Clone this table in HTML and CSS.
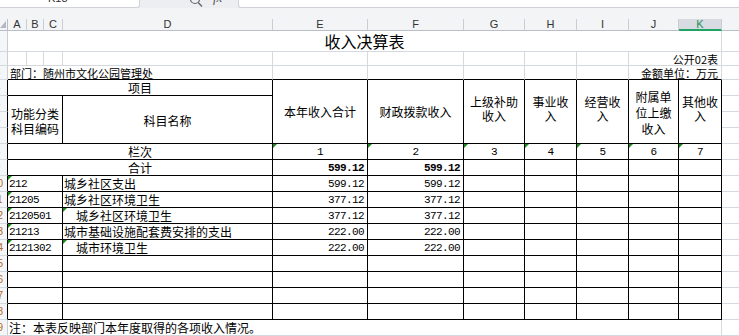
FILE: index.html
```html
<!DOCTYPE html>
<html lang="zh-CN">
<head>
<meta charset="utf-8">
<title>收入决算表</title>
<link rel="stylesheet" href="styles.css">
</head>
<body>
<div class="fbar">
  <div class="namebox"><span>K18</span></div>
  <div class="tools">
    <svg class="mag" width="16" height="8" viewBox="0 0 16 8"><circle cx="7" cy="-1" r="4.5" fill="none" stroke="#666" stroke-width="1.2"/><line x1="10.2" y1="2.4" x2="14" y2="6.5" stroke="#666" stroke-width="1.4"/></svg>
    <span class="fx">fx</span>
  </div>
  <div class="finput"></div>
</div>
<div class="sheet">
  <div class="spacer"></div>

  <div class="ch corner"><svg width="6" height="7" viewBox="0 0 6 7"><polygon points="6,0 6,7 0,7" fill="#b4b8c0"/></svg></div>
  <div class="ch">A</div><div class="ch">B</div><div class="ch">C</div><div class="ch">D</div>
  <div class="ch">E</div><div class="ch">F</div><div class="ch">G</div><div class="ch">H</div>
  <div class="ch">I</div><div class="ch">J</div><div class="ch sel">K</div><div class="ch chl"></div>

  <div class="rh"><span>1</span></div>
  <div class="c s11 ctr title">收入决算表</div>
  <div class="c l"></div>

  <div class="rh"><span>2</span></div>
  <div class="c"></div><div class="c"></div><div class="c"></div><div class="c"></div>
  <div class="c"></div><div class="c"></div><div class="c"></div><div class="c"></div><div class="c"></div>
  <div class="c s2 small rt">公开02表</div>
  <div class="c l"></div>

  <div class="rh"><span>3</span></div>
  <div class="c s4 bb small lf2">部门：随州市文化公园管理处</div>
  <div class="c bb"></div><div class="c bb"></div><div class="c bb"></div><div class="c bb"></div><div class="c bb"></div>
  <div class="c s2 bb small rt">金额单位：万元</div>
  <div class="c l"></div>

  <div class="rh k"><span>4</span></div>
  <div class="c b s4 ctr bot">项目</div>
  <div class="c b r4 ctr hd">本年收入合计</div>
  <div class="c b r4 ctr hd">财政拨款收入</div>
  <div class="c b r4 ctr hd up"><span>上级补助<br>收入</span></div>
  <div class="c b r4 ctr hd up"><span>事业收<br>入</span></div>
  <div class="c b r4 ctr hd up"><span>经营收<br>入</span></div>
  <div class="c b r4 ctr hd three"><span>附属单<br>位上缴<br>收入</span></div>
  <div class="c b r4 ctr hd up"><span>其他收<br>入</span></div>
  <div class="c l"></div>

  <div class="rh k"><span>5</span></div>
  <div class="c b s3 r3 ctr hd low"><span>功能分类<br>科目编码</span></div>
  <div class="c b r3 ctr hd low">科目名称</div>
  <div class="c l"></div>
  <div class="rh k"><span>6</span></div><div class="c l"></div>
  <div class="rh k"><span>7</span></div><div class="c l"></div>

  <div class="rh k"><span>8</span></div>
  <div class="c b s4 ctr">栏次</div>
  <div class="c b ctr num tri">1</div>
  <div class="c b ctr num tri">2</div>
  <div class="c b ctr num tri">3</div>
  <div class="c b ctr num tri">4</div>
  <div class="c b ctr num tri">5</div>
  <div class="c b ctr num tri">6</div>
  <div class="c b ctr num tri">7</div>
  <div class="c l"></div>

  <div class="rh k"><span>9</span></div>
  <div class="c b s4 ctr">合计</div>
  <div class="c b rt num bold">599.12</div>
  <div class="c b rt num bold">599.12</div>
  <div class="c b"></div><div class="c b"></div><div class="c b"></div><div class="c b"></div><div class="c b"></div>
  <div class="c l"></div>

  <div class="rh k"><span>10</span></div>
  <div class="c b s3 lf num tri">212</div>
  <div class="c b lf">城乡社区支出</div>
  <div class="c b rt num">599.12</div>
  <div class="c b rt num">599.12</div>
  <div class="c b"></div><div class="c b"></div><div class="c b"></div><div class="c b"></div><div class="c b"></div>
  <div class="c l"></div>

  <div class="rh k"><span>11</span></div>
  <div class="c b s3 lf num tri">21205</div>
  <div class="c b lf">城乡社区环境卫生</div>
  <div class="c b rt num">377.12</div>
  <div class="c b rt num">377.12</div>
  <div class="c b"></div><div class="c b"></div><div class="c b"></div><div class="c b"></div><div class="c b"></div>
  <div class="c l"></div>

  <div class="rh k"><span>12</span></div>
  <div class="c b s3 lf num tri">2120501</div>
  <div class="c b ind tri">城乡社区环境卫生</div>
  <div class="c b rt num">377.12</div>
  <div class="c b rt num">377.12</div>
  <div class="c b"></div><div class="c b"></div><div class="c b"></div><div class="c b"></div><div class="c b"></div>
  <div class="c l"></div>

  <div class="rh k"><span>13</span></div>
  <div class="c b s3 lf num tri">21213</div>
  <div class="c b lf">城市基础设施配套费安排的支出</div>
  <div class="c b rt num">222.00</div>
  <div class="c b rt num">222.00</div>
  <div class="c b"></div><div class="c b"></div><div class="c b"></div><div class="c b"></div><div class="c b"></div>
  <div class="c l"></div>

  <div class="rh k"><span>14</span></div>
  <div class="c b s3 lf num tri">2121302</div>
  <div class="c b ind tri">城市环境卫生</div>
  <div class="c b rt num">222.00</div>
  <div class="c b rt num">222.00</div>
  <div class="c b"></div><div class="c b"></div><div class="c b"></div><div class="c b"></div><div class="c b"></div>
  <div class="c l"></div>

  <div class="rh k"><span>15</span></div>
  <div class="c b s3"></div><div class="c b"></div>
  <div class="c b"></div><div class="c b"></div><div class="c b"></div><div class="c b"></div><div class="c b"></div><div class="c b"></div><div class="c b"></div>
  <div class="c l"></div>

  <div class="rh k"><span>16</span></div>
  <div class="c b s3"></div><div class="c b"></div>
  <div class="c b"></div><div class="c b"></div><div class="c b"></div><div class="c b"></div><div class="c b"></div><div class="c b"></div><div class="c b"></div>
  <div class="c l"></div>

  <div class="rh k"><span>17</span></div>
  <div class="c b s3"></div><div class="c b"></div>
  <div class="c b"></div><div class="c b"></div><div class="c b"></div><div class="c b"></div><div class="c b"></div><div class="c b"></div><div class="c b"></div>
  <div class="c l"></div>

  <div class="rh k"><span>18</span></div>
  <div class="c b s3"></div><div class="c b"></div>
  <div class="c b"></div><div class="c b"></div><div class="c b"></div><div class="c b"></div><div class="c b"></div><div class="c b"></div><div class="c b"></div>
  <div class="c l"></div>

  <div class="rh"><span>19</span></div>
  <div class="c s11 lf note">注：本表反映部门本年度取得的各项收入情况。</div>
  <div class="c l"></div>
</div>
</body>
</html>
```
FILE: styles.css
```css
html, body {
  margin: 0;
  padding: 0;
}
body {
  width: 739px;
  height: 336px;
  overflow: hidden;
  background: #ffffff;
  font-family: "Noto Sans CJK SC", "Noto Sans", sans-serif;
  color: #000;
}

/* formula bar (mostly scrolled out of view) */
.fbar {
  display: flex;
  height: 8px;
  background: #eceef1;
  overflow: hidden;
}
.namebox {
  box-sizing: border-box;
  width: 140px;
  background: #fff;
  border-right: 1px solid #cfd3d9;
  border-bottom: 1px solid #cfd3d9;
  border-bottom-right-radius: 3px;
  overflow: hidden;
}
.namebox span {
  display: block;
  font: 11px/11px "Liberation Sans", sans-serif;
  color: #333;
  margin-top: -7px;
  padding-left: 48px;
}
.tools {
  width: 98px;
  display: flex;
  align-items: flex-start;
  overflow: hidden;
}
.mag {
  margin-left: 48px;
  flex: none;
}
.fx {
  display: block;
  margin-left: 9px;
  margin-top: -8px;
  font: italic 13px/12px "Liberation Serif", serif;
  color: #555;
}
.finput {
  box-sizing: border-box;
  flex: 1;
  background: #fff;
  border-left: 1px solid #cfd3d9;
  border-bottom: 1px solid #cfd3d9;
  border-bottom-left-radius: 3px;
}

/* sheet grid */
.sheet {
  display: grid;
  grid-template-columns: 8px 19px 17px 19px 210px 95px 96px 61px 52px 52px 50px 43px 60px;
  grid-template-rows: 11px 12px 21px 14px 14px repeat(16, 16px);
}
.sheet > div {
  box-sizing: border-box;
  min-width: 0;
}
.spacer {
  grid-column: 1 / -1;
  background: #f3f4f6;
}

/* column header */
.ch {
  background: #f3f4f6;
  border-right: 1px solid #c9cdd5;
  border-bottom: 1px solid #b9bec8;
  font: 11px/11px "Liberation Sans", sans-serif;
  color: #333;
  text-align: center;
}
.corner {
  display: flex;
  align-items: flex-end;
  justify-content: flex-start;
  padding-bottom: 2px;
  border-right-color: #b9bec8;
}
.corner svg { display: block; }
.ch.sel {
  background: #d8dbe1;
  color: #1f9155;
  border-bottom: 2px solid #21a366;
}
.ch.chl {
  grid-column: 13;
  border-right: none;
}

/* row header: scrolled so only its right edge shows */
.rh {
  grid-column: 1;
  background: #f5f6f8;
  border-right: 1px solid #c9cdd5;
  border-bottom: 1px solid #d4d8df;
  overflow: hidden;
  display: flex;
  justify-content: flex-end;
  align-items: center;
  font: 10px/15px "Liberation Sans", sans-serif;
  color: #b0682a;
}
.rh span {
  flex: none;
  width: 19px;
  text-align: center;
}
.rh.k { border-right-color: #000; }

/* cells */
.c {
  border-right: 1px solid #d4d8df;
  border-bottom: 1px solid #d4d8df;
  display: flex;
  align-items: center;
  overflow: hidden;
  white-space: nowrap;
  font-size: 12px;
  line-height: 14px;
  position: relative;
}
.c.l {
  grid-column: 13;
  border-right: none;
}
.c.b {
  border-right-color: #000;
  border-bottom-color: #000;
}
.c.bb { border-bottom-color: #000; }

.s2 { grid-column: span 2; }
.s3 { grid-column: span 3; }
.s4 { grid-column: span 4; }
.s11 { grid-column: span 11; }
.r3 { grid-row: span 3; }
.r4 { grid-row: span 4; }

.ctr { justify-content: center; text-align: center; }
.rt { justify-content: flex-end; padding-right: 3px; }
.lf { padding-left: 1px; }
.lf2 { padding-left: 2px; }
.ind { padding-left: 13px; }
.bot { align-items: flex-end; }

.title {
  font-size: 16px;
  line-height: 18px;
  overflow: visible;
}
.small {
  font-size: 11px;
  line-height: 12px;
  align-items: flex-end;
}
.hd { white-space: normal; }
.hd span { display: block; }
.hd.up { padding-bottom: 6px; }
.hd.three { line-height: 16px; padding-top: 2px; }
.hd.low { padding-top: 2px; }
.hd.low span { line-height: 15px; }

.num {
  font-family: "Liberation Mono", monospace;
  font-size: 11px;
  letter-spacing: -0.6px;
}
.bold { font-weight: bold; }
.note { padding-left: 1px; }

/* green "number stored as text" markers */
.tri::before {
  content: "";
  position: absolute;
  left: 0;
  top: 0;
  border-top: 4px solid #1d8a1d;
  border-right: 4px solid transparent;
}
```
